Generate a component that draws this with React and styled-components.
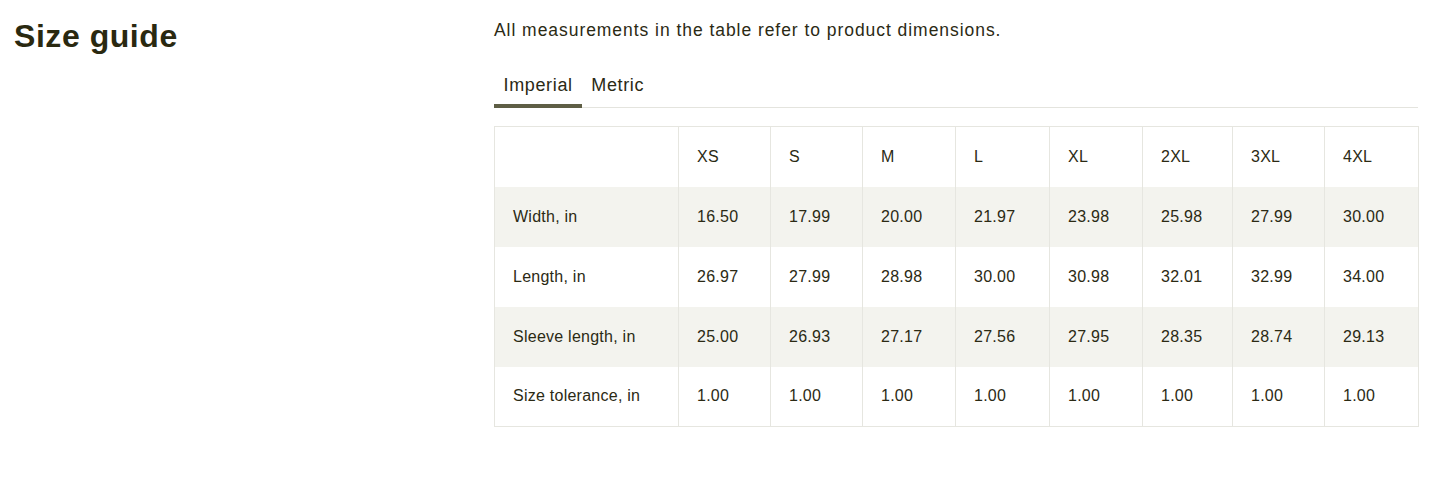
import React, { useState } from "react";
import styled, { createGlobalStyle } from "styled-components";

const Global = createGlobalStyle`
  html, body { margin: 0; padding: 0; background: #fff; }
  body { font-family: "Liberation Sans", Arial, sans-serif; color: #2b2a14; }
  * { box-sizing: border-box; }
`;

const Page = styled.div`
  display: grid;
  grid-template-columns: 480px 924px;
  padding: 14px 0 0 14px;
`;

const Title = styled.h1`
  margin: 0;
  font-size: 32px;
  line-height: 44px;
  font-weight: 700;
  color: #2a2910;
  letter-spacing: 0.55px;
`;

const Content = styled.div`
  display: flex;
  flex-direction: column;
`;

const Intro = styled.p`
  margin: 4px 0 0;
  font-size: 17.5px;
  line-height: 24px;
  color: #2b2a14;
  letter-spacing: 0.95px;
`;

const Tabs = styled.div`
  display: flex;
  margin-top: 31px;
  width: 924px;
  border-bottom: 1px solid #e4e4de;
`;

const Tab = styled.button`
  appearance: none;
  background: none;
  border: none;
  padding: 0 9px 7px 9.5px;
  margin-bottom: -1px;
  font-family: inherit;
  font-size: 18px;
  line-height: 24px;
  letter-spacing: 0.65px;
  color: #2b2a14;
  cursor: pointer;
  border-bottom: 4px solid ${(p) => (p.$active ? "#5e5e45" : "transparent")};
`;

const Table = styled.table`
  margin-top: 18px;
  width: 924px;
  table-layout: fixed;
  border-collapse: collapse;
  border: 1px solid #e6e6e0;
  font-size: 16px;
  letter-spacing: 0.25px;
  color: #2b2a14;
`;

const Row = styled.tr`
  height: 60px;
  background: ${(p) => (p.$striped ? "#f3f3ee" : "#fff")};
`;

const Cell = styled.td`
  padding: 0 0 0 18px;
  border-left: 1px solid #e6e6e0;
  text-align: left;
  font-weight: 400;
  vertical-align: middle;
`;

const widths = [184, 92, 92, 93, 94, 93, 90, 92, 94];
const sizes = ["XS", "S", "M", "L", "XL", "2XL", "3XL", "4XL"];

const imperial = [
  ["Width, in", "16.50", "17.99", "20.00", "21.97", "23.98", "25.98", "27.99", "30.00"],
  ["Length, in", "26.97", "27.99", "28.98", "30.00", "30.98", "32.01", "32.99", "34.00"],
  ["Sleeve length, in", "25.00", "26.93", "27.17", "27.56", "27.95", "28.35", "28.74", "29.13"],
  ["Size tolerance, in", "1.00", "1.00", "1.00", "1.00", "1.00", "1.00", "1.00", "1.00"],
];

const metric = [
  ["Width, cm", "41.91", "45.70", "50.80", "55.80", "60.90", "66.00", "71.10", "76.20"],
  ["Length, cm", "68.50", "71.10", "73.60", "76.20", "78.70", "81.30", "83.80", "86.40"],
  ["Sleeve length, cm", "63.50", "68.40", "69.00", "70.00", "71.00", "72.00", "73.00", "74.00"],
  ["Size tolerance, cm", "2.54", "2.54", "2.54", "2.54", "2.54", "2.54", "2.54", "2.54"],
];

export default function App() {
  const [tab, setTab] = useState("imperial");
  const rows = tab === "imperial" ? imperial : metric;
  return (
    <>
      <Global />
      <Page>
        <Title>Size guide</Title>
        <Content>
          <Intro>All measurements in the table refer to product dimensions.</Intro>
          <Tabs>
            <Tab $active={tab === "imperial"} onClick={() => setTab("imperial")}>Imperial</Tab>
            <Tab $active={tab === "metric"} onClick={() => setTab("metric")}>Metric</Tab>
          </Tabs>
          <Table>
            <colgroup>
              {widths.map((w, i) => (
                <col key={i} style={{ width: w }} />
              ))}
            </colgroup>
            <tbody>
              <Row>
                <Cell as="th" />
                {sizes.map((s) => (
                  <Cell as="th" key={s}>{s}</Cell>
                ))}
              </Row>
              {rows.map((r, ri) => (
                <Row key={r[0]} $striped={ri % 2 === 0}>
                  {r.map((v, i) => (
                    <Cell key={i}>{v}</Cell>
                  ))}
                </Row>
              ))}
            </tbody>
          </Table>
        </Content>
      </Page>
    </>
  );
}
